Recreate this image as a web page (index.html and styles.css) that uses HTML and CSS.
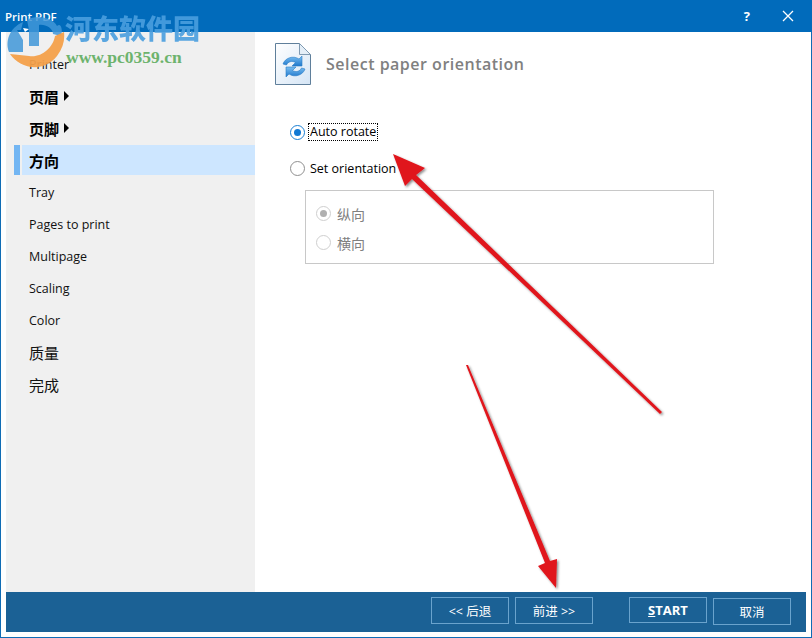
FILE: index.html
```html
<!DOCTYPE html>
<html lang="zh">
<head>
<meta charset="utf-8">
<title>Print PDF</title>
<link rel="stylesheet" href="styles.css">
</head>
<body>
<div class="window">
  <header class="titlebar">
    <span class="title">Print PDF</span>
    <div class="controls">
      <span class="help">?</span>
      <svg class="close" width="12" height="12" viewBox="0 0 12 12"><path d="M1 1L11 11M11 1L1 11" stroke="#fff" stroke-width="1.3" fill="none"/></svg>
    </div>
  </header>
  <div class="content">
    <nav class="sidebar">
      <div class="item">Printer</div>
      <div class="item strong">页眉<span class="caret"></span></div>
      <div class="item strong">页脚<span class="caret"></span></div>
      <div class="item strong selected">方向</div>
      <div class="item">Tray</div>
      <div class="item">Pages to print</div>
      <div class="item">Multipage</div>
      <div class="item">Scaling</div>
      <div class="item">Color</div>
      <div class="item cjk">质量</div>
      <div class="item cjk">完成</div>
    </nav>
    <main class="main">
      <div class="heading">
        <svg class="doc" width="37" height="44" viewBox="0 0 37 44">
          <defs>
            <linearGradient id="paper" x1="0" y1="0" x2="1" y2="1"><stop offset="0" stop-color="#ffffff"/><stop offset="1" stop-color="#d5e5f5"/></linearGradient>
            <linearGradient id="arr" x1="0" y1="0" x2="0" y2="1"><stop offset="0" stop-color="#7cc0f2"/><stop offset="1" stop-color="#1f78cc"/></linearGradient>
          </defs>
          <path d="M0.5 1.5H24.5L35.5 12.5V42.5H0.5Z" fill="url(#paper)" stroke="#5f7f9b"/>
          <path d="M24.5 1.5V12.5H35.5Z" fill="#e4eef7" stroke="#7f9ab2"/>
          <path d="M8 22C10 16 18 13 24 17L27 14V24H17L20.500 20.500C17 18.500 13 19.500 11.500 23Z" fill="url(#arr)" stroke="#2a7cc6" stroke-width=".6"/>
          <path d="M30 27C28 33 20 36 14 32L11 35V25H21L17.500 28.500C21 30.500 25 29.500 26.500 26Z" fill="url(#arr)" stroke="#2a7cc6" stroke-width=".6"/>
        </svg>
        <h1 class="heading-text">Select paper orientation</h1>
      </div>
      <div class="options">
        <label class="radio-row first"><span class="radio on"></span><span class="focus">Auto rotate</span></label>
        <label class="radio-row"><span class="radio"></span><span>Set orientation</span></label>
        <div class="group">
          <div class="sub-row"><span class="radio small disabled on"></span>纵向</div>
          <div class="sub-row"><span class="radio small disabled"></span>横向</div>
        </div>
      </div>
    </main>
  </div>
  <footer class="footer">
    <button class="btn back">&lt;&lt; 后退</button>
    <button class="btn next">前进 &gt;&gt;</button>
    <button class="btn start"><u>S</u>TART</button>
    <button class="btn cancel">取消</button>
  </footer>
</div>

<svg class="overlay" width="812" height="638" viewBox="0 0 812 638">
  <defs>
    <filter id="sh" x="-10%" y="-10%" width="120%" height="120%"><feDropShadow dx="1.500" dy="1.500" stdDeviation="1.200" flood-color="#000" flood-opacity=".45"/></filter>
  </defs>
  <g fill="#e0141c" filter="url(#sh)">
    <path d="M393 154L425 168L416 175L662 412L660 414L412 179L405 186Z"/>
    <path d="M466 365L468 365L550 561L557 559L556 588L538 566L545 563Z"/>
  </g>
</svg>

<div class="watermark">
  <svg class="wm-logo" width="62" height="62" viewBox="0 0 62 62">
    <path d="M6 44C2 34 6 20 20 14L18 22L14 22L20 32V44Z" fill="#3f97d8" opacity=".85"/>
    <path d="M24 12C34 6 50 10 54 18C58 14 60 22 58 28L50 26C50 20 42 16 36 17V38H26V22Z" fill="#3f97d8" opacity=".85"/>
    <path d="M7 46C16 60 40 66 54 48C60 40 62 32 61 24L52 28C50 40 38 50 26 48Z" fill="#f3a04a" opacity=".95"/>
    <path d="M20 20L22 24L26 21" fill="#fff"/>
  </svg>
  <div class="wm-name">河东软件园</div>
  <div class="wm-url">www.pc0359.cn</div>
</div>
</body>
</html>
```
FILE: styles.css
```css
* { box-sizing: border-box; }
html, body { margin: 0; padding: 0; }
body {
  width: 812px;
  height: 638px;
  overflow: hidden;
  position: relative;
  font-family: "Open Sans", "Noto Sans CJK SC", sans-serif;
  font-size: 12px;
  color: #000;
  background: #fff;
}
.window {
  width: 812px;
  height: 638px;
  display: flex;
  flex-direction: column;
  background: #fff;
  border: 1px solid #0f6cb5;
  border-top: 0;
  padding-bottom: 5px;
}
.titlebar {
  height: 32px;
  flex: none;
  margin: 0 -1px;
  background: #016bbb;
  color: #fff;
  display: flex;
  align-items: center;
  justify-content: space-between;
  padding: 0 18px 0 5px;
}
.title { font-size: 11.5px; font-weight: 600; }
.controls { display: flex; align-items: center; gap: 32px; }
.help { font-size: 13px; font-weight: 700; }
.content { flex: 1; display: flex; padding: 0 5px; min-height: 0; }
.sidebar {
  width: 249px;
  flex: none;
  background: #f0f0f0;
  padding-top: 16px;
}
.item {
  height: 32px;
  display: flex;
  align-items: center;
  padding-left: 23px;
  font-size: 12.500px;
  color: #111;
}
.item.strong { font-size: 15px; font-weight: 700; color: #000; }
.item.cjk { font-size: 15px; }
.caret {
  margin-left: 5px;
  width: 0;
  height: 0;
  border-left: 5px solid #000;
  border-top: 5px solid transparent;
  border-bottom: 5px solid transparent;
}
.selected {
  height: 30px;
  margin: 1px 0;
  margin-left: 8px;
  padding-left: 15px;
  background: linear-gradient(to right, #73b6f3 0, #73b6f3 6px, #f0f0f0 6px, #f0f0f0 8px, #cde6ff 8px);
}
.main { flex: 1; background: #fff; padding: 10px 0 0 20px; }
.heading { display: flex; align-items: center; gap: 14px; height: 44px; }
.heading-text {
  margin: 0;
  font-family: "Open Sans", sans-serif;
  font-size: 16px;
  font-weight: 600;
  color: #808080;
  letter-spacing: .5px;
}
.options { padding: 0 0 0 15px; margin-top: 37px; }
.radio-row { display: flex; align-items: center; height: 18px; font-size: 12.500px; margin-bottom: 18px; }
.radio {
  width: 15px;
  height: 15px;
  flex: none;
  border-radius: 50%;
  border: 1px solid #8f8f8f;
  background: #fff;
  margin-right: 5px;
  position: relative;
}
.radio.on { border-color: #1a7fd4; }
.radio.on::after {
  content: "";
  position: absolute;
  left: 3px;
  top: 3px;
  width: 7px;
  height: 7px;
  border-radius: 50%;
  background: #0f78d4;
}
.focus { outline: 1px dotted #000; outline-offset: 0; line-height: 16px; padding: 0 1px; margin-left: -1px; }
.group {
  margin: -5px 0 0 15px;
  width: 409px;
  height: 74px;
  border: 1px solid #c8c8c8;
  padding: 8px 0 0 10px;
}
.sub-row { display: flex; align-items: center; height: 29px; font-size: 14px; color: #808080; }
.radio.small { margin-right: 6px; }
.radio.disabled { border-color: #cfcfcf; }
.radio.disabled.on::after { background: #b0b0b0; }
.footer {
  margin: 0 5px;
  height: 40px;
  flex: none;
  background: #1b6195;
  display: flex;
  align-items: flex-start;
  padding: 5px 0 0 425px;
}
.btn {
  width: 78px;
  height: 27px;
  background: transparent;
  border: 1px solid #6aa3cd;
  color: #fff;
  font-family: "Open Sans", "Noto Sans CJK SC", sans-serif;
  font-size: 12.500px;
  padding: 0;
}
.next { margin-left: 6px; }
.start { margin-left: 36px; font-weight: 700; height: 26px; font-size: 13px; }
.cancel { margin-left: 6px; margin-top: 1px; }
.overlay { position: absolute; left: 0; top: 0; pointer-events: none; }
.watermark { position: absolute; left: 0; top: 0; width: 210px; height: 70px; pointer-events: none; }
.wm-logo { position: absolute; left: 3px; top: 8px; }
.wm-name {
  position: absolute;
  left: 65px;
  top: 11px;
  font-family: "Noto Sans CJK SC", serif;
  font-size: 27px;
  line-height: 34px;
  font-weight: 900;
  color: #4a9fdf;
  opacity: .9;
}
.wm-url {
  position: absolute;
  left: 66px;
  top: 46px;
  font-family: "Liberation Serif", serif;
  font-size: 17.500px;
  line-height: 22px;
  font-weight: 700;
  color: #6db36d;
}
```
